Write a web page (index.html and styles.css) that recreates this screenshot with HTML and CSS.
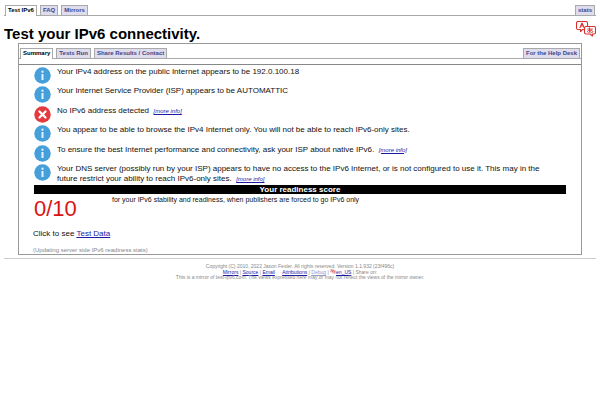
FILE: index.html
```html
<!DOCTYPE html>
<html lang="en">
<head>
    <meta charset="UTF-8">
    <meta name="viewport" content="width=device-width, initial-scale=1.0">
    <title>Test your IPv6.</title>
    <link rel="stylesheet" href="styles.css">
</head>
<body>
    <!-- shared icons -->
    <svg class="defs" aria-hidden="true">
        <symbol id="info" viewBox="0 0 34 34">
            <circle cx="17" cy="17" r="16.5" fill="#459fdb"/>
            <circle cx="17" cy="9.500" r="2.300" fill="#e4f2fb"/>
            <path d="M15 14h4v12h-4z" fill="#e4f2fb"/>
        </symbol>
        <symbol id="fail" viewBox="0 0 34 34">
            <circle cx="17" cy="17" r="16.5" fill="#e33b3f"/>
            <path d="M11 11l12 12M23 11L11 23" stroke="#fff" stroke-width="4.5" stroke-linecap="round"/>
        </symbol>
        <symbol id="lang" viewBox="0 0 40 32">
            <g fill="none" stroke="#d8322e" stroke-width="2.2" stroke-linejoin="round" stroke-linecap="round">
                <path d="M17 17h-4l-4 4v-4H4q-3 0-3-3V4q0-3 3-3h16q3 0 3 3v6"/>
                <path d="M20 11h16q3 0 3 3v9q0 3-3 3h-3v4l-5-4h-8q-3 0-3-3v-9q0-3 3-3z"/>
                <path d="M8 13l4-9 4 9M9.500 10h5"/>
                <path d="M23 16h10M27 13.500v8M31 18c-2 5-8 6-8 3s8-4 10-1-1 3-3 3" stroke-width="1.700"/>
            </g>
        </symbol>
    </svg>

    <nav class="tabs">
        <a class="active" href="#">Test IPv6</a>
        <a href="#">FAQ</a>
        <a href="#">Mirrors</a>
        <a class="right" href="#">stats</a>
    </nav>

    <header>
        <h1>Test your IPv6 connectivity.</h1>
        <a href="#" aria-label="Language"><svg class="lang"><use href="#lang"/></svg></a>
    </header>

    <main>
        <nav class="tabs inner">
            <a class="active" href="#">Summary</a>
            <a href="#">Tests Run</a>
            <a href="#">Share Results / Contact</a>
            <a class="right" href="#">For the Help Desk</a>
        </nav>

        <div class="content">
            <ul class="results">
                <li><svg><use href="#info"/></svg><p>Your IPv4 address on the public Internet appears to be 192.0.100.18</p></li>
                <li><svg><use href="#info"/></svg><p>Your Internet Service Provider (ISP) appears to be AUTOMATTIC</p></li>
                <li><svg><use href="#fail"/></svg><p>No IPv6 address detected &nbsp;<a class="more" href="#">[more info]</a></p></li>
                <li><svg><use href="#info"/></svg><p>You appear to be able to browse the IPv4 Internet only. You will not be able to reach IPv6-only sites.</p></li>
                <li><svg><use href="#info"/></svg><p>To ensure the best Internet performance and connectivity, ask your ISP about native IPv6. &nbsp;<a class="more" href="#">[more info]</a></p></li>
                <li><svg><use href="#info"/></svg><p>Your DNS server (possibly run by your ISP) appears to have no access to the IPv6 Internet, or is not configured to use it. This may in the future restrict your ability to reach IPv6-only sites. &nbsp;<a class="more" href="#">[more info]</a></p></li>
            </ul>

            <h2>Your readiness score</h2>
            <div class="score">
                <span class="number">0/10</span>
                <p>for your IPv6 stability and readiness, when publishers are forced to go IPv6 only</p>
            </div>

            <p class="data">Click to see <a href="#">Test Data</a></p>
            <p class="updating">(Updating server side IPv6 readiness stats)</p>
        </div>
    </main>

    <footer>
        <p>Copyright (C) 2010, 2022 Jason Fesler. All rights reserved. Version 1.1.932 (23f496c)</p>
        <p>
            <a href="#">Mirrors</a> | <a href="#">Source</a> | <a href="#">Email</a>
            <span class="gap">-</span> <span class="gap">-</span>
            <a href="#">Attributions</a> | <a class="debug" href="#">Debug</a> |
            <a class="locale" href="#"><svg><use href="#lang"/></svg>en_US</a> | Share on:
        </p>
        <p>This is a mirror of test-ipv6.com. The views expressed here may or may not reflect the views of the mirror owner.</p>
    </footer>
</body>
</html>
```
FILE: styles.css
```css
body {
    margin: 5px 4px;
    font-family: "Liberation Sans", Arial, sans-serif;
    font-size: 8px;
    line-height: 10px;
    color: #111;
    background: #fff;
}
h1, h2, p, ul {
    margin: 0;
    padding: 0;
}
a {
    color: #1a1aa6;
}
.defs {
    display: none;
}

/* tab bars */
.tabs {
    display: flex;
    gap: 3px;
    padding: 0 1px;
    border-bottom: 1px solid #aaa;
}
.tabs a {
    box-sizing: border-box;
    height: 10px;
    padding: 0 2px;
    border: 1px solid #aaa;
    border-bottom: none;
    background: #dde;
    color: #448;
    font-size: 6px;
    font-weight: bold;
    line-height: 9px;
    text-decoration: none;
}
.tabs .active {
    height: 11px;
    margin-bottom: -1px;
    background: #fff;
    color: #000;
}
.tabs .right {
    margin-left: auto;
}

header {
    display: flex;
    justify-content: space-between;
    height: 27px;
}
h1 {
    margin-top: 9px;
    font-size: 15px;
    line-height: 18px;
    color: #000;
}
.lang {
    display: block;
    width: 20px;
    height: 16px;
    margin-top: 5px;
}

main {
    margin: 0 14px;
    border: 1px solid #999;
}
.inner {
    padding-top: 4px;
}
.content {
    margin-top: 5px;
    padding: 2px 14px 0;
    border-top: 1px solid #888;
}
.results {
    display: flex;
    flex-direction: column;
    justify-content: space-between;
    min-height: 117px;
    margin: 0 1px 1px;
    list-style: none;
}
.results li {
    display: flex;
    gap: 6px;
    padding-right: 8px;
}
.results p {
    flex: 1;
}
.results svg {
    width: 17px;
    height: 17px;
}
.more {
    font-size: 6px;
    font-style: italic;
}
h2 {
    margin: 0 1px;
    background: #000;
    color: #fff;
    font-size: 8px;
    line-height: 9px;
    text-align: center;
}
.score {
    display: flex;
    margin: 0 1px;
    font-size: 7px;
    line-height: 12px;
}
.number {
    width: 78px;
    color: #d81414;
    font-size: 22px;
    line-height: 29px;
}
.data {
    margin-top: 6px;
}
.updating {
    margin-top: 7px;
    color: #888;
    font-size: 6px;
    line-height: 8px;
}

footer {
    margin-top: 3px;
    padding-top: 5px;
    border-top: 1px solid #ccc;
    color: #888;
    font-size: 5px;
    line-height: 5px;
    text-align: center;
}
.debug {
    color: #99c;
}
.gap {
    color: #ccc;
}
.locale svg {
    width: 6px;
    height: 5px;
}
```
